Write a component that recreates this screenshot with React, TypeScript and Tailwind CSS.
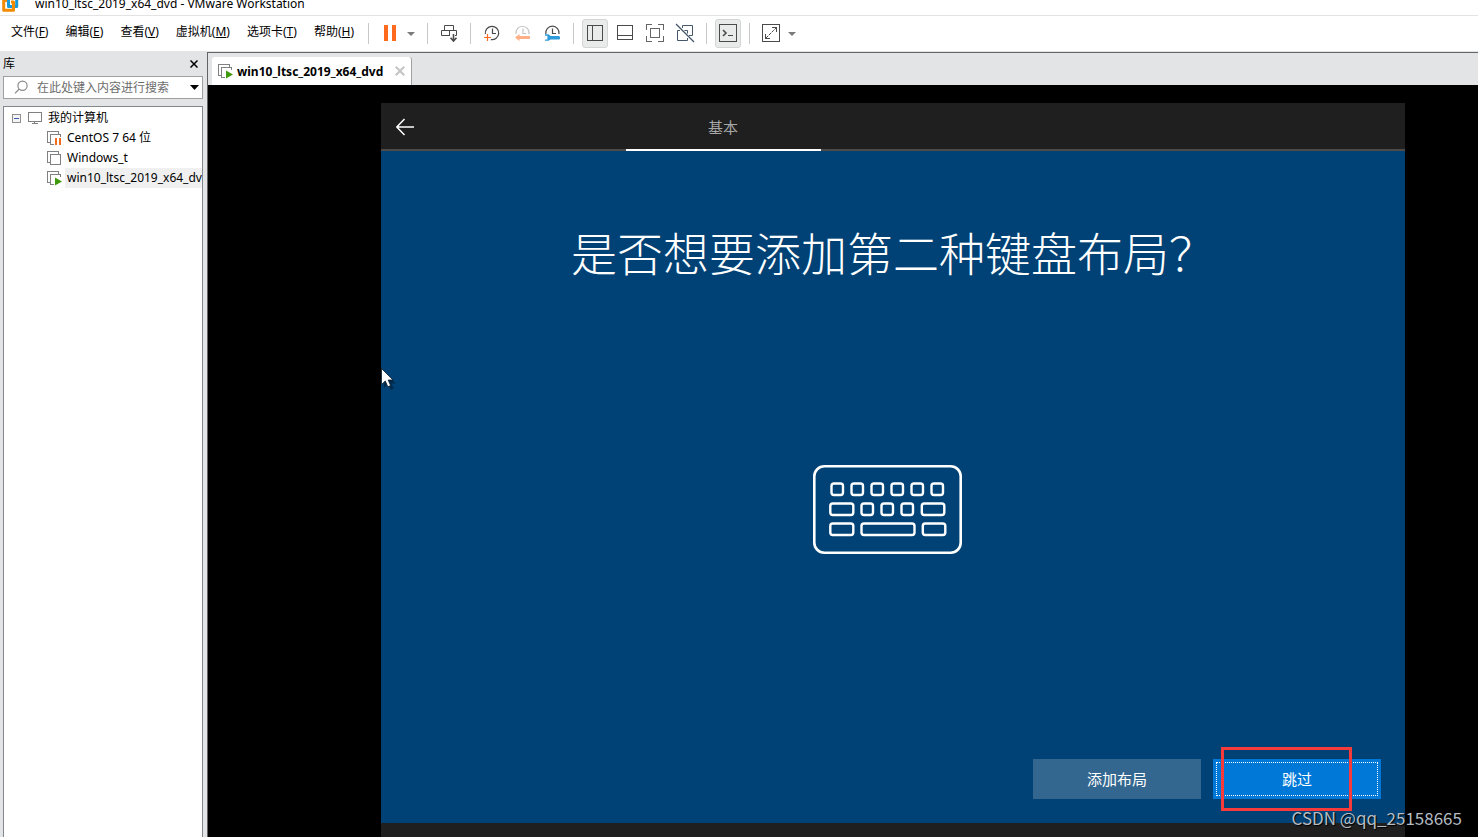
import React from "react";

const uiFont = "font-['Noto_Sans','Noto_Sans_CJK_SC',sans-serif]";

const menus = [
  { label: "文件", key: "F" },
  { label: "编辑", key: "E" },
  { label: "查看", key: "V" },
  { label: "虚拟机", key: "M" },
  { label: "选项卡", key: "T" },
  { label: "帮助", key: "H" },
];

function Logo() {
  return (
    <svg width="17" height="12" viewBox="0 0 17 12" fill="none" strokeWidth="3" aria-hidden="true">
      <path d="M6.5 -3V6.5H14.7V-3" stroke="#1a9ad6" strokeLinejoin="round" />
      <path d="M6 0.5H1.7V10.2H11.5V2H9" stroke="#f38b00" strokeLinejoin="round" />
      <path d="M6.5 0V5" stroke="#1a9ad6" />
    </svg>
  );
}

function Glyph({ children, color = "#4a4a4a", crisp = false }: { children: React.ReactNode; color?: string; crisp?: boolean }) {
  return (
    <svg
      width="20"
      height="21"
      viewBox="0 0 20 21"
      fill="none"
      stroke={color}
      strokeWidth="1"
      shapeRendering={crisp ? "crispEdges" : "auto"}
      aria-hidden="true"
    >
      {children}
    </svg>
  );
}

function ToolButton({ label, pressed = false, children }: { label: string; pressed?: boolean; children: React.ReactNode }) {
  return (
    <button
      type="button"
      aria-label={label}
      aria-pressed={pressed}
      className={
        pressed
          ? "flex h-[29px] w-[26px] items-center justify-center rounded-[3px] border border-[#d4d6d6] bg-[#e9ebeb]"
          : "flex h-[29px] w-[26px] items-center justify-center"
      }
    >
      <span className="shrink-0">{children}</span>
    </button>
  );
}

function Caret({ label }: { label: string }) {
  return (
    <button type="button" aria-label={label} className="flex h-[29px] w-4 items-center justify-center">
      <svg width="8" height="4" viewBox="0 0 8 4" fill="#7a7a7a" aria-hidden="true">
        <path d="M0 0H8L4 4Z" />
      </svg>
    </button>
  );
}

function Divider() {
  return <span className="mx-2 h-[21px] w-px shrink-0 bg-[#c8c8c8]" />;
}

function VmIcon({ state }: { state: "running" | "paused" | "off" }) {
  return (
    <svg width="15" height="15" viewBox="0 0 15 15" fill="none" stroke="#808080" shapeRendering="crispEdges" aria-hidden="true">
      <path d="M2.5 11.5H0.5V0.5H11.5V2.5" />
      {state === "off" && <rect x="3.5" y="3.5" width="10" height="10" fill="#fff" />}
      {state === "paused" && (
        <>
          <path d="M6.5 13.5H3.5V3.5H13.5V6" />
          <path d="M8 7H10V14H8ZM12 7H14V14H12Z" fill="#f36b1c" stroke="none" />
        </>
      )}
      {state === "running" && (
        <>
          <path d="M6.5 13.5H3.5V3.5H13.5V6" />
          <path d="M8 6.5L15 10.5L8 14.5Z" fill="#3f9a0b" stroke="none" shapeRendering="auto" />
        </>
      )}
    </svg>
  );
}

function MenuBar() {
  return (
    <div className="flex h-[35px] shrink-0 items-center bg-white">
      <nav className="flex w-[360px] shrink-0 gap-px pb-1 pl-[3px]">
        {menus.map((m) => (
          <button key={m.key} type="button" className="shrink-0 whitespace-nowrap px-2 text-[12px] leading-4 text-black">
            {m.label}(<span className="underline underline-offset-1">{m.key}</span>)
          </button>
        ))}
      </nav>
      <Divider />
      <ToolButton label="挂起">
        <Glyph>
          <path d="M4 2H8V18H4ZM12 2H16V18H12Z" fill="#ff6a1f" stroke="none" />
        </Glyph>
      </ToolButton>
      <Caret label="电源选项" />
      <Divider />
      <ToolButton label="发送 Ctrl+Alt+Del">
        <Glyph>
          <path d="M5.5 7.5V2.5H14.5V7.5M11 12.5H2.5V7.5H17.5V12.5H16M10.5 7.5V12.5" />
          <path d="M14.5 11V18M11.5 14.8L14.5 18L17.5 14.8" strokeWidth="1.6" />
        </Glyph>
      </ToolButton>
      <Divider />
      <div className="flex gap-1">
        <ToolButton label="拍摄快照">
          <Glyph>
            <path d="M3.4 11.2A6.7 6.7 0 1 1 8.8 16.6" strokeWidth="1.2" />
            <path d="M10.5 5.5V10.5H14" strokeWidth="1.2" />
            <path d="M5.5 11V18M2 14.5H9" stroke="#ff6a1f" strokeWidth="1.2" />
          </Glyph>
        </ToolButton>
        <ToolButton label="恢复快照">
          <Glyph color="#c4c4c4">
            <path d="M4 11A6.6 6.6 0 1 1 17 11" strokeWidth="1.2" />
            <path d="M11 5.5V10.5H14" strokeWidth="1.2" />
            <path d="M3 14.5L7.5 11V13H18V16H7.5V18Z" fill="#ffb088" stroke="none" />
          </Glyph>
        </ToolButton>
        <ToolButton label="管理快照">
          <Glyph>
            <path d="M3.8 11A6.7 6.7 0 1 1 17 11" strokeWidth="1.2" />
            <path d="M10.5 5.5V10.5H14" strokeWidth="1.2" />
            <path
              d="M3 11.3H6.5L8.6 13H17L18 14V16L17 16.6H8.6L6.5 17.8H3V16.4H5.4V12.8H3Z"
              fill="#2e9bdc"
              stroke="none"
            />
          </Glyph>
        </ToolButton>
      </div>
      <Divider />
      <div className="flex gap-1">
        <ToolButton label="显示库" pressed>
          <Glyph crisp>
            <path d="M2.5 2.5H17.5V17.5H2.5ZM7.5 2.5V17.5" />
          </Glyph>
        </ToolButton>
        <ToolButton label="显示缩略图栏">
          <Glyph crisp>
            <path d="M2.5 2.5H17.5V16.5H2.5ZM2.5 12.5H17.5" />
          </Glyph>
        </ToolButton>
        <ToolButton label="全屏">
          <Glyph crisp color="#666666">
            <path d="M1.5 7V1.5H7M13 1.5H18.5V7M18.5 13V18.5H13M7 18.5H1.5V13M5.5 5.5H14.5V14.5H5.5Z" />
          </Glyph>
        </ToolButton>
        <ToolButton label="Unity 模式">
          <Glyph color="#43566a">
            <path d="M7.5 5V2.5H17.5V12.5H14M5 7.5H2.5V17.5H12.5V15M9.5 7.5H12.5V10.5" />
            <path d="M1 1L19 19" strokeWidth="1.2" />
          </Glyph>
        </ToolButton>
      </div>
      <Divider />
      <ToolButton label="控制台视图" pressed>
        <Glyph crisp>
          <path d="M1.5 1.5H18.5V18.5H1.5Z" />
          <path d="M5 7L8 10L5 13" strokeWidth="1.6" shapeRendering="auto" />
          <path d="M10 12.5H15" />
        </Glyph>
      </ToolButton>
      <Divider />
      <ToolButton label="自由拉伸">
        <Glyph crisp>
          <path d="M1.5 1.5H18.5V18.5H1.5ZM11 4.5H15.5V9M4.5 11V15.5H9" />
          <path d="M5 15L15 5" strokeDasharray="3 1" shapeRendering="auto" />
        </Glyph>
      </ToolButton>
      <Caret label="拉伸选项" />
    </div>
  );
}

function Library() {
  return (
    <aside className="flex w-[207px] shrink-0 flex-col bg-[#e3e4e6] px-[3px]">
      <div className="flex h-[25px] items-center justify-between pr-[5px]">
        <h2 className="text-[12px] leading-4 text-black">库</h2>
        <button type="button" aria-label="关闭库" className="flex h-4 w-[10px] items-center justify-center">
          <svg width="8" height="8" viewBox="0 0 8 8" stroke="#000" strokeWidth="1.5" aria-hidden="true">
            <path d="M0.5 0.5L7.5 7.5M7.5 0.5L0.5 7.5" />
          </svg>
        </button>
      </div>
      <div className="mr-px flex h-[23px] items-center border border-[#a0a0a0] bg-white pl-[10px] pr-[3px]">
        <svg width="15" height="15" viewBox="0 0 15 15" fill="none" stroke="#8a8a8a" strokeWidth="1.2" aria-hidden="true">
          <circle cx="8.5" cy="5.7" r="4.6" />
          <path d="M5.2 9L1 13.3" />
        </svg>
        <input
          type="text"
          aria-label="搜索库"
          placeholder="在此处键入内容进行搜索"
          className="ml-2 min-w-0 flex-1 bg-transparent text-[12px] leading-4 text-black outline-none placeholder:text-[#6d6d6d]"
        />
        <button type="button" aria-label="搜索筛选" className="flex h-4 w-[10px] items-center justify-center">
          <svg width="9" height="5" viewBox="0 0 9 5" aria-hidden="true">
            <path d="M0 0H9L4.5 5Z" />
          </svg>
        </button>
      </div>
      <div className="mr-px mt-[7px] flex-1 overflow-hidden border border-b-0 border-[#828790] bg-white pt-px text-[12px] text-black">
        <ul>
          <li>
            <div className="flex h-5 items-center pl-2">
              <svg width="9" height="9" viewBox="0 0 9 9" fill="#f4f4f4" stroke="#8f8f8f" shapeRendering="crispEdges" aria-hidden="true">
                <rect x="0.5" y="0.5" width="8" height="8" />
                <path d="M2 4.5H7" stroke="#3a5bb0" />
              </svg>
              <svg className="ml-[7px]" width="14" height="12" viewBox="0 0 14 12" fill="none" stroke="#808080" shapeRendering="crispEdges" aria-hidden="true">
                <path d="M0.5 0.5H13.5V9.5H0.5ZM6.5 9.5V11.5M4 11.5H10" />
              </svg>
              <span className="ml-[6px]">我的计算机</span>
            </div>
            <ul>
              <li className="flex h-5 items-center pl-[43px]">
                <VmIcon state="paused" />
                <span className="ml-1 whitespace-nowrap px-px">CentOS 7 64 位</span>
              </li>
              <li className="flex h-5 items-center pl-[43px]">
                <VmIcon state="off" />
                <span className="ml-1 whitespace-nowrap px-px">Windows_t</span>
              </li>
              <li className="flex h-5 items-center pl-[43px]">
                <span className="shrink-0">
                  <VmIcon state="running" />
                </span>
                <span className="ml-[3px] mr-px flex-1 whitespace-nowrap bg-[#f0f0f0] pl-[2px] leading-5">win10_ltsc_2019_x64_dv</span>
              </li>
            </ul>
          </li>
        </ul>
      </div>
    </aside>
  );
}

const keys: [number, number, number][] = [
  [18.5, 18.5, 11.5],
  [38.5, 18.5, 11.5],
  [58.5, 18.5, 11.5],
  [78.5, 18.5, 11.5],
  [98.5, 18.5, 11.5],
  [118.5, 18.5, 11.5],
  [17.3, 38.5, 23],
  [48.5, 38.5, 11.5],
  [68.5, 38.5, 11.5],
  [88.5, 38.5, 11.5],
  [108.8, 38.5, 22.5],
  [17.3, 58.5, 23],
  [48.5, 58.5, 53],
  [109.8, 58.5, 22.5],
];

function Keyboard() {
  return (
    <svg width="149" height="89" viewBox="0 0 149 89" fill="none" stroke="#fff" strokeWidth="2.6" aria-hidden="true">
      <rect x="1.3" y="1.3" width="146.4" height="86.4" rx="10" />
      {keys.map(([x, y, w]) => (
        <rect key={`${x}-${y}`} x={x} y={y} width={w} height="11.5" rx="2.5" strokeWidth="2.4" />
      ))}
    </svg>
  );
}

function Pointer() {
  return (
    <svg className="absolute left-0 top-[265px]" width="18" height="24" viewBox="0 0 18 24" aria-hidden="true">
      <path d="M3 4V20L7 16L10 22L13 20.5L10.5 15.5H15Z" fill="#000" opacity="0.35" />
      <path d="M0.5 0.5V16.5L4.3 13L6.8 18.8L9.6 17.6L7.2 12H12Z" fill="#fff" stroke="#0a1a2a" strokeWidth="0.8" />
    </svg>
  );
}

function Guest() {
  return (
    <section className="relative flex flex-1 flex-col">
      <header className="flex h-12 shrink-0 bg-[#1f1f1f]">
        <div className="flex w-[245px] items-center border-b-2 border-[#4d4a48] pl-[15px] pt-[2px]">
          <button type="button" aria-label="返回">
            <svg width="18" height="18" viewBox="0 0 18 18" fill="none" stroke="#fff" strokeWidth="1.5" aria-hidden="true">
              <path d="M18 9H1M8.5 1L0.8 9L8.5 17" />
            </svg>
          </button>
        </div>
        <button type="button" className="w-[195px] border-b-2 border-white pr-px pt-[2px] text-[15px] leading-5 text-[#a6a6a6]">
          基本
        </button>
        <div className="flex-1 border-b-2 border-[#4d4a48]" />
      </header>
      <div className="flex flex-1 flex-col items-center bg-[#004275]">
        <h1 className="mt-[70px] text-[46px] font-light leading-[64px] text-white">是否想要添加第二种键盘布局？</h1>
        <div className="mt-[180px] pr-3">
          <Keyboard />
        </div>
        <div className="mt-auto flex gap-3 self-end pb-6 pr-6 text-[15px] leading-5 text-white">
          <button type="button" className="h-10 w-[168px] bg-[#33678f]">
            添加布局
          </button>
          <div className="relative">
            <button type="button" className="h-10 w-[168px] bg-[#0078d7] p-[3px]">
              <span className="flex h-full items-center justify-center border border-dotted border-white">跳过</span>
            </button>
            <span className="pointer-events-none absolute -top-3 left-2 h-16 w-[131px] border-[3px] border-[#f93a3a]" />
          </div>
        </div>
      </div>
      <div className="h-[14px] bg-[#1f1f1f]" />
      <Pointer />
    </section>
  );
}

export default function App() {
  return (
    <div className={`${uiFont} relative flex h-screen flex-col overflow-hidden bg-white`}>
      <div className="flex h-4 shrink-0 items-start gap-4 overflow-hidden border-b border-[#e3e3e3] bg-white pl-[2px]">
        <Logo />
        <h1 className="text-[12px] leading-2 text-black">win10_ltsc_2019_x64_dvd - VMware Workstation</h1>
      </div>
      <MenuBar />
      <div className="flex min-h-0 flex-1">
        <Library />
        <main className="flex min-w-0 flex-1 flex-col border-t border-[#e3e4e6]">
          <div className="flex h-[33px] shrink-0 items-end border-l border-t border-[#646464] bg-[#e3e4e6] pl-1">
            <div className="flex h-7 items-center rounded-t-[3px] border-r border-[#a0a0a0] bg-white pl-[6px] pr-[6px]">
              <VmIcon state="running" />
              <span className="ml-1 whitespace-nowrap pt-px text-[12px] font-bold leading-4 text-black">win10_ltsc_2019_x64_dvd</span>
              <button type="button" aria-label="关闭选项卡" className="ml-3">
                <svg width="10" height="10" viewBox="0 0 9 9" stroke="#c4c4c4" strokeWidth="1.8" aria-hidden="true">
                  <path d="M0.7 0.7L8.3 8.3M8.3 0.7L0.7 8.3" />
                </svg>
              </button>
            </div>
          </div>
          <div className="flex flex-1 border-l border-[#646464] bg-black pl-[173px] pr-[73px] pt-[18px]">
            <Guest />
          </div>
        </main>
      </div>
      <p className="absolute bottom-[7px] right-4 font-['Noto_Sans_CJK_SC',sans-serif] text-[17px] leading-6 text-[#b4bcc4] [text-shadow:1px_1px_1px_#000000]">
        CSDN @qq_25158665
      </p>
    </div>
  );
}
